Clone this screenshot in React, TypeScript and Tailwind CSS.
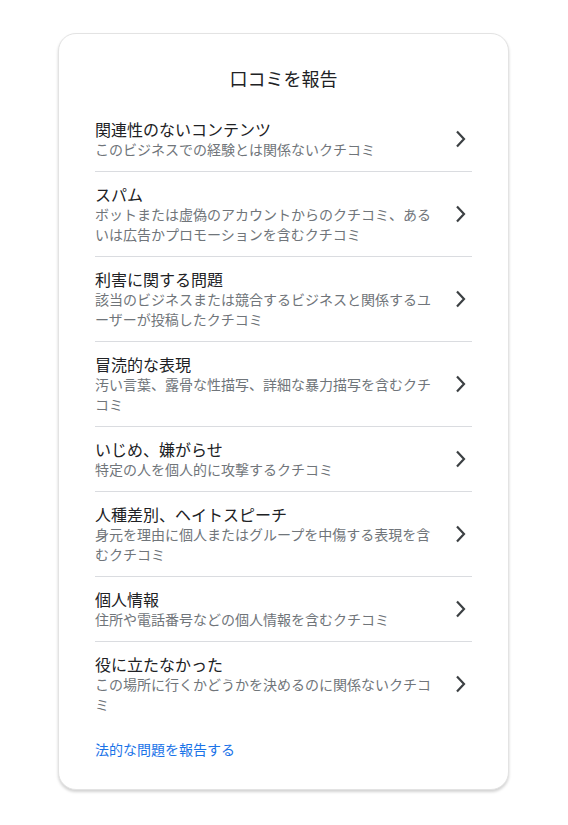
import React from 'react';

const items = [
  { title: '関連性のないコンテンツ', desc: 'このビジネスでの経験とは関係ないクチコミ' },
  { title: 'スパム', desc: 'ボットまたは虚偽のアカウントからのクチコミ、あるいは広告かプロモーションを含むクチコミ' },
  { title: '利害に関する問題', desc: '該当のビジネスまたは競合するビジネスと関係するユーザーが投稿したクチコミ' },
  { title: '冒涜的な表現', desc: '汚い言葉、露骨な性描写、詳細な暴力描写を含むクチコミ' },
  { title: 'いじめ、嫌がらせ', desc: '特定の人を個人的に攻撃するクチコミ' },
  { title: '人種差別、ヘイトスピーチ', desc: '身元を理由に個人またはグループを中傷する表現を含むクチコミ' },
  { title: '個人情報', desc: '住所や電話番号などの個人情報を含むクチコミ' },
  { title: '役に立たなかった', desc: 'この場所に行くかどうかを決めるのに関係ないクチコミ' },
];

const Chevron = () => (
  <svg width="12" height="18" viewBox="0 0 12 18" fill="none" className="shrink-0">
    <path d="M3 1.5 L10 9 L3 16.5" stroke="#3c4043" strokeWidth="2.2" />
  </svg>
);

export default function App() {
  return (
    <div className="min-h-screen bg-white pt-[33px] font-['Noto_Sans_CJK_JP',sans-serif]">
      <div className="ml-[58px] w-[451px] rounded-[18px] border border-[#e3e3e3] bg-white pb-[30px] shadow-[0_2px_3px_rgba(0,0,0,0.18)]">
        <h1 className="pt-[32px] pb-[17px] text-center text-[18px] leading-[24px] text-[#202124]">口コミを報告</h1>
        <div className="mx-[36px]">
          {items.map((item, i) => (
            <div
              key={item.title}
              className={`flex items-center gap-4 py-3 ${i < items.length - 1 ? 'border-b border-[#dadce0]' : ''}`}
            >
              <div className="w-[338px]">
                <div className="text-[16px] leading-[20px] text-[#202124]">{item.title}</div>
                <div className="text-[14px] leading-[20px] text-[#70757a]">{item.desc}</div>
              </div>
              <div className="flex w-[24px] justify-center">
                <Chevron />
              </div>
            </div>
          ))}
          <a href="#" className="mt-[13px] block text-[14px] leading-[20px] text-[#1a73e8]">
            法的な問題を報告する
          </a>
        </div>
      </div>
    </div>
  );
}
